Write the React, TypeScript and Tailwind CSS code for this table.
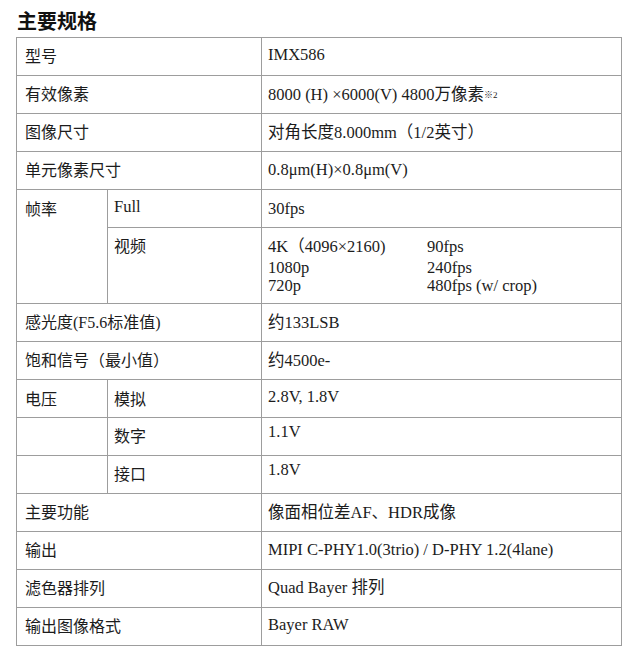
import React from 'react'

const line = 'border-r border-b border-[#9d9d9d]'

function Cell({
  children,
  className = '',
}: {
  children?: React.ReactNode
  className?: string
}) {
  return <div className={`${line} flex items-center ${className}`}>{children}</div>
}

// plain two-column row: label spans both left columns
function SpecRow({ label, value, valueClass = '' }: { label: string; value: React.ReactNode; valueClass?: string }) {
  return (
    <>
      <Cell className="col-span-2 pl-[8px]">{label}</Cell>
      <Cell className={`pl-[6px] text-[16.5px] ${valueClass}`}>{value}</Cell>
    </>
  )
}

export default function App() {
  return (
    <div
      className="w-[640px] h-[663px] bg-white text-[#1c1c1c] text-[16px] leading-[22px]"
      style={{ fontFamily: '"Liberation Serif", "Noto Sans CJK SC", serif' }}
    >
      <div className="h-[37px] pl-[17px] pt-[7px]">
        <h1
          className="text-[20px] leading-[28px] font-bold text-[#111]"
          style={{ fontFamily: '"Noto Sans CJK SC", sans-serif' }}
        >
          主要规格
        </h1>
      </div>

      <div className="ml-[16px] w-[606px] grid grid-cols-[91px_154px_360px] auto-rows-[38px] border-l border-t border-[#9d9d9d]">
        <SpecRow label="型号" value="IMX586" valueClass="pb-[4px]" />
        <SpecRow
          label="有效像素"
          value={
            <span>
              8000 (H) ×6000(V) 4800万像素
              <span className="text-[9px] align-[2px]">※2</span>
            </span>
          }
        />
        <SpecRow label="图像尺寸" value="对角长度8.000mm（1/2英寸）" />
        <SpecRow label="单元像素尺寸" value="0.8μm(H)×0.8μm(V)" valueClass="pb-[2px]" />

        {/* 帧率 */}
        <Cell className="row-span-3 !items-start pl-[8px] pt-[9px]">帧率</Cell>
        <Cell className="pl-[6px] pb-[3px] text-[16.5px]">Full</Cell>
        <Cell className="pl-[6px] text-[16.5px]">30fps</Cell>
        <Cell className="row-span-2 !items-start pl-[6px] pt-[8px]">视频</Cell>
        <div className={`${line} row-span-2 pl-[6px] pt-[10px] leading-[18px] text-[16.5px]`}>
          <div className="grid grid-cols-[159px_1fr]">
            <span className="mb-[3px]">4K（4096×2160)</span>
            <span className="mb-[3px]">90fps</span>
            <span>1080p</span>
            <span>240fps</span>
            <span>720p</span>
            <span>480fps (w/ crop)</span>
          </div>
        </div>

        <SpecRow label="感光度(F5.6标准值)" value="约133LSB" />
        <SpecRow label="饱和信号（最小值）" value="约4500e-" />

        {/* 电压 */}
        <Cell className="pl-[8px] pt-[2px]">电压</Cell>
        <Cell className="pl-[6px] pt-[2px]">模拟</Cell>
        <Cell className="pl-[6px] pb-[4px] text-[16.5px]">2.8V, 1.8V</Cell>
        <Cell />
        <Cell className="pl-[6px]">数字</Cell>
        <Cell className="pl-[6px] pb-[10px] text-[16.5px]">1.1V</Cell>
        <Cell />
        <Cell className="pl-[6px]">接口</Cell>
        <Cell className="pl-[6px] pb-[10px] text-[16.5px]">1.8V</Cell>

        <SpecRow label="主要功能" value="像面相位差AF、HDR成像" />
        <SpecRow label="输出" value="MIPI C-PHY1.0(3trio) / D-PHY 1.2(4lane)" valueClass="pb-[2px]" />
        <SpecRow label="滤色器排列" value="Quad Bayer 排列" valueClass="pb-[2px]" />
        <SpecRow label="输出图像格式" value="Bayer RAW" valueClass="pb-[4px]" />
      </div>
    </div>
  )
}
